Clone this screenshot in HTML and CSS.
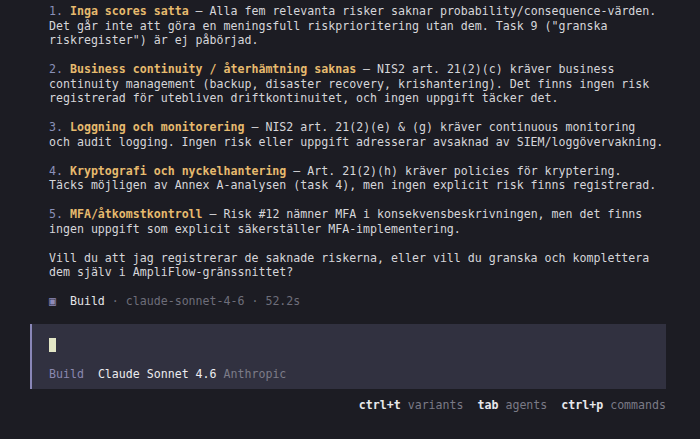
FILE: index.html
```html
<!DOCTYPE html>
<html lang="sv">
<head>
<meta charset="utf-8">
<link rel="stylesheet" href="styles.css">
</head>
<body>
<div class="screen">
  <div class="messages">
    <p><span class="num">1.</span> <b class="hd">Inga scores satta</b> – Alla fem relevanta risker saknar probability/consequence-värden.<br>Det går inte att göra en meningsfull riskprioritering utan dem. Task 9 ("granska<br>riskregister") är ej påbörjad.</p>
    <p><span class="num">2.</span> <b class="hd">Business continuity / återhämtning saknas</b> – NIS2 art. 21(2)(c) kräver business<br>continuity management (backup, disaster recovery, krishantering). Det finns ingen risk<br>registrerad för utebliven driftkontinuitet, och ingen uppgift täcker det.</p>
    <p><span class="num">3.</span> <b class="hd">Loggning och monitorering</b> – NIS2 art. 21(2)(e) &amp; (g) kräver continuous monitoring<br>och audit logging. Ingen risk eller uppgift adresserar avsaknad av SIEM/loggövervakning.</p>
    <p><span class="num">4.</span> <b class="hd">Kryptografi och nyckelhantering</b> – Art. 21(2)(h) kräver policies för kryptering.<br>Täcks möjligen av Annex A-analysen (task 4), men ingen explicit risk finns registrerad.</p>
    <p><span class="num">5.</span> <b class="hd">MFA/åtkomstkontroll</b> – Risk #12 nämner MFA i konsekvensbeskrivningen, men det finns<br>ingen uppgift som explicit säkerställer MFA-implementering.</p>
    <p>Vill du att jag registrerar de saknade riskerna, eller vill du granska och komplettera<br>dem själv i AmpliFlow-gränssnittet?</p>
    <p class="status"><span class="icon">▣</span>  <span class="agent">Build</span> <span class="dim">· claude-sonnet-4-6 · 52.2s</span></p>
  </div>
  <div class="prompt">
    <div class="prompt-line"><span class="cursor"></span></div>
    <div class="prompt-meta"><span class="mode">Build</span>  <span class="model">Claude Sonnet 4.6</span> <span class="provider">Anthropic</span></div>
  </div>
  <div class="hints"><b>ctrl+t</b> <span class="dim2">variants</span>  <b>tab</b> <span class="dim2">agents</span>  <b>ctrl+p</b> <span class="dim2">commands</span></div>
</div>
</body>
</html>
```
FILE: styles.css
```css
html, body {
  margin: 0;
  padding: 0;
  background: #1c1c23;
}
body {
  width: 700px;
  height: 439px;
  overflow: hidden;
  font-family: "DejaVu Sans Mono", "Liberation Mono", monospace;
  font-size: 11.6px;
  line-height: 14.5px;
  color: #d6d6da;
}
.screen {
  display: flex;
  flex-direction: column;
  padding-top: 4px;
}
.messages {
  padding-left: 49px;
}
.messages p {
  margin: 0 0 14.5px 0;
  white-space: pre;
}
.num {
  color: #8a90b8;
}
.hd {
  color: #e6ba6e;
  font-weight: bold;
}
.icon {
  color: #8e8ab8;
}
.agent {
  color: #e4e4e8;
}
.dim {
  color: #6e6e7a;
}
.prompt {
  margin-left: 30px;
  width: 617px;
  margin-top: 1px;
  border-left: 2px solid #8a87b8;
  background: #313140;
  padding: 14px 0 7px 17px;
}
.prompt-line {
  height: 14.5px;
  margin-bottom: 14.5px;
  display: flex;
  align-items: center;
}
.cursor {
  display: inline-block;
  width: 7px;
  height: 14px;
  background: #e3e6c6;
}
.prompt-meta {
  white-space: pre;
}
.mode {
  color: #8a88b0;
}
.model {
  color: #ececef;
}
.provider {
  color: #7c7c88;
}
.hints {
  width: 666px;
  text-align: right;
  margin-top: 9px;
  white-space: pre;
  color: #e8e8ec;
}
.dim2 {
  color: #7a7a86;
}
```
